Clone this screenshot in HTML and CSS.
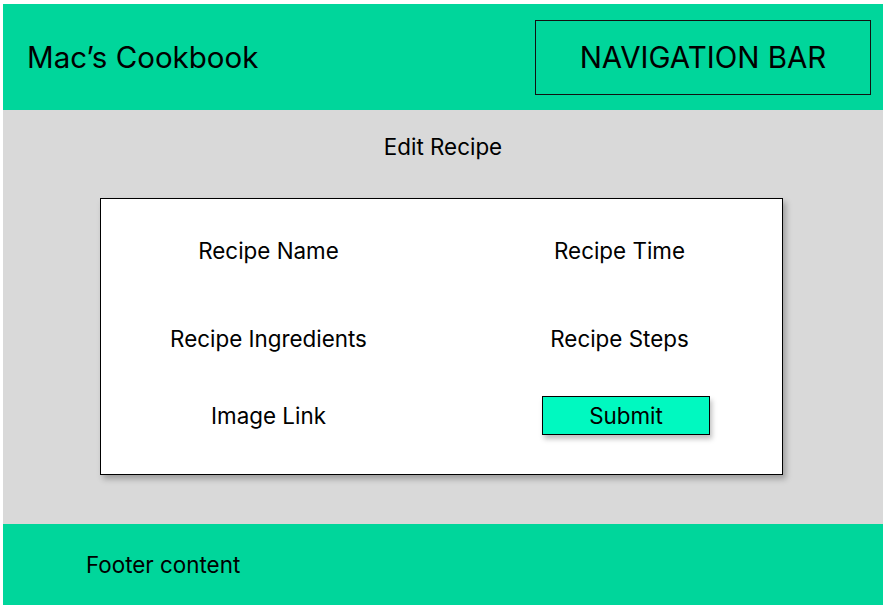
FILE: index.html
```html
<!DOCTYPE html>
<html lang="en">
<head>
<meta charset="utf-8">
<title>Mac's Cookbook</title>
<link rel="stylesheet" href="styles.css">
</head>
<body>
<div class="page">
  <header class="header">
    <h1 class="title">Mac’s Cookbook</h1>
    <nav class="nav">NAVIGATION BAR</nav>
  </header>
  <main class="main">
    <h2 class="heading">Edit Recipe</h2>
    <form class="form">
      <div class="cell">Recipe Name</div>
      <div class="cell">Recipe Time</div>
      <div class="cell">Recipe Ingredients</div>
      <div class="cell">Recipe Steps</div>
      <div class="cell">Image Link</div>
      <div class="cell"><button type="button" class="submit">Submit</button></div>
    </form>
  </main>
  <footer class="footer">Footer content</footer>
</div>
</body>
</html>
```

FILE: styles.css
```css
html, body {
  margin: 0;
  padding: 0;
  background: #ffffff;
}
body {
  font-family: Inter, "Liberation Sans", sans-serif;
  color: #000;
}
.page {
  margin: 4px 2px 1px 3px;
  display: flex;
  flex-direction: column;
}
.header {
  height: 106px;
  background: #00d69b;
  display: flex;
  align-items: center;
  justify-content: space-between;
  padding: 0 12px 0 24px;
}
.title {
  margin: 0;
  font-weight: 400;
  font-size: 29.5px;
}
.nav {
  width: 334px;
  height: 73px;
  border: 1px solid #111;
  display: flex;
  align-items: center;
  justify-content: center;
  font-size: 29.5px;
}
.main {
  height: 414px;
  background: #d9d9d9;
  display: flex;
  flex-direction: column;
  align-items: center;
}
.heading {
  margin: 24px 0 0 0;
  font-weight: 400;
  font-size: 22.4px;
  line-height: 26px;
}
.form {
  margin: 38px 0 0 -4px;
  box-sizing: content-box;
  background: #fff;
  border: 1px solid #000;
  box-shadow: 3px 4px 6px rgba(0,0,0,0.28);
  display: grid;
  grid-template-columns: 324px 324px;
  grid-template-rows: 60px 60px 38px;
  column-gap: 27px;
  row-gap: 28px;
  padding: 21px 0 40px 6px;
  width: 675px;
}
.cell {
  display: flex;
  align-items: center;
  justify-content: center;
  font-size: 22.4px;
}
.submit {
  margin-left: 13px;
  width: 168px;
  height: 39px;
  background: #00f9c0;
  border: 1px solid #000;
  box-shadow: 2px 4px 5px rgba(0,0,0,0.25);
  font-family: Inter, "Liberation Sans", sans-serif;
  font-size: 22.4px;
  color: #000;
  padding: 0;
}
.footer {
  height: 81px;
  background: #00d69b;
  display: flex;
  align-items: center;
  padding-left: 83px;
  font-size: 22.4px;
}
```
